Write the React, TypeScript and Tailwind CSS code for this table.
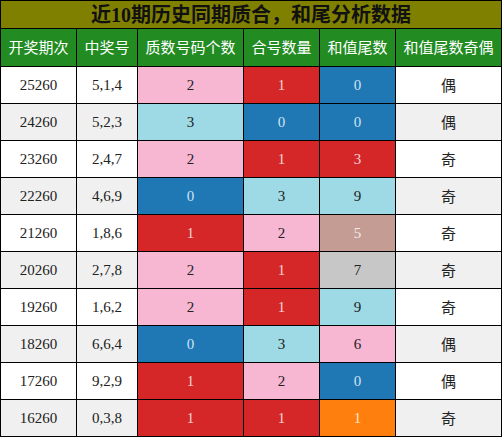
const rows = [
  { qi: "25260", hao: "5,1,4", zs: [2, "pink"], hh: [1, "red"], wei: [0, "blue"], oe: "偶" },
  { qi: "24260", hao: "5,2,3", zs: [3, "cyan"], hh: [0, "blue"], wei: [0, "blue"], oe: "偶" },
  { qi: "23260", hao: "2,4,7", zs: [2, "pink"], hh: [1, "red"], wei: [3, "red"], oe: "奇" },
  { qi: "22260", hao: "4,6,9", zs: [0, "blue"], hh: [3, "cyan"], wei: [9, "cyan"], oe: "奇" },
  { qi: "21260", hao: "1,8,6", zs: [1, "red"], hh: [2, "pink"], wei: [5, "tan"], oe: "奇" },
  { qi: "20260", hao: "2,7,8", zs: [2, "pink"], hh: [1, "red"], wei: [7, "gray"], oe: "奇" },
  { qi: "19260", hao: "1,6,2", zs: [2, "pink"], hh: [1, "red"], wei: [9, "cyan"], oe: "奇" },
  { qi: "18260", hao: "6,6,4", zs: [0, "blue"], hh: [3, "cyan"], wei: [6, "pink"], oe: "偶" },
  { qi: "17260", hao: "9,2,9", zs: [1, "red"], hh: [2, "pink"], wei: [0, "blue"], oe: "偶" },
  { qi: "16260", hao: "0,3,8", zs: [1, "red"], hh: [1, "red"], wei: [1, "orange"], oe: "奇" },
] as const

const tone: Record<string, string> = {
  pink: "bg-[#f7b6d2] text-[#222]",
  cyan: "bg-[#9edae5] text-[#222]",
  red: "bg-[#d62728] text-[#f3d6d6]",
  blue: "bg-[#1f77b4] text-[#cfe3f2]",
  tan: "bg-[#c49c94] text-[#f3ebe9]",
  gray: "bg-[#c7c7c7] text-[#222]",
  orange: "bg-[#ff7f0e] text-[#ffe6cc]",
}

const heads = ["开奖期次", "中奖号", "质数号码个数", "合号数量", "和值尾数", "和值尾数奇偶"]

export default function App() {
  return (
    <div className="w-[502px] h-[437px] bg-black p-px flex flex-col gap-px">
      <div className="h-[27px] bg-[#808000] flex items-center justify-center text-[20px] font-bold text-[#111] font-['Liberation_Serif','Noto_Sans_CJK_SC',serif]">
        近10期历史同期质合，和尾分析数据
      </div>
      <div className="grid grid-cols-[75px_60px_105px_75px_75px_105px] gap-px">
        {heads.map((h) => (
          <div
            key={h}
            className="h-[37px] bg-[#228b22] text-white text-[15px] flex items-center justify-center font-['Noto_Sans_CJK_SC',sans-serif]"
          >
            {h}
          </div>
        ))}
        {rows.map((r, i) => {
          const base = i % 2 === 0 ? "bg-white" : "bg-[#f0f0f0]"
          const cell = "h-[36px] flex items-center justify-center text-[15px]"
          const serif = "font-['Liberation_Serif','Noto_Sans_CJK_SC',serif]"
          return [
            <div key={r.qi + "a"} className={`${cell} ${base} ${serif} text-[#222]`}>{r.qi}</div>,
            <div key={r.qi + "b"} className={`${cell} ${base} ${serif} text-[#222]`}>{r.hao}</div>,
            <div key={r.qi + "c"} className={`${cell} ${serif} ${tone[r.zs[1]]}`}>{r.zs[0]}</div>,
            <div key={r.qi + "d"} className={`${cell} ${serif} ${tone[r.hh[1]]}`}>{r.hh[0]}</div>,
            <div key={r.qi + "e"} className={`${cell} ${serif} ${tone[r.wei[1]]}`}>{r.wei[0]}</div>,
            <div key={r.qi + "f"} className={`${cell} ${base} text-[#222] font-['Noto_Sans_CJK_SC',sans-serif]`}>{r.oe}</div>,
          ]
        })}
      </div>
    </div>
  )
}
